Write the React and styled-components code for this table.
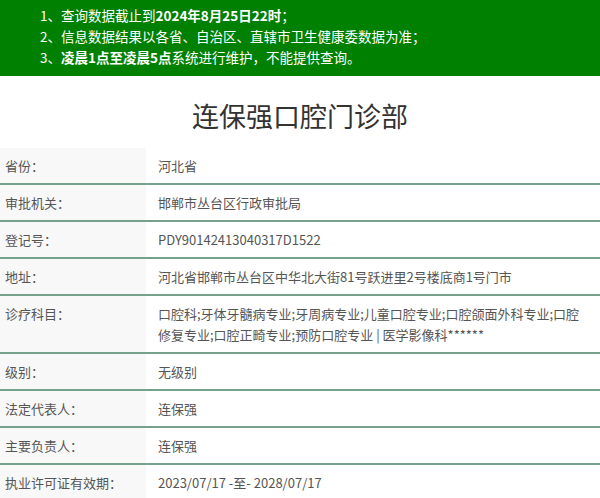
import React from "react";
import styled, { createGlobalStyle } from "styled-components";

const Global = createGlobalStyle`
  html, body { margin: 0; padding: 0; background: #fff; }
  body { font-family: "Noto Sans CJK SC", "Noto Sans", sans-serif; }
`;

const Page = styled.div`
  width: 600px;
  height: 498px;
  overflow: hidden;
  background: #fff;
`;

const Notice = styled.ol`
  list-style: none;
  margin: 0;
  background: #008000;
  color: #fff;
  font-size: 13.5px;
  line-height: 21px;
  padding: 5px 0 8px 40px;
  height: 63px;
`;

const NoticeItem = styled.li`
  white-space: nowrap;
`;

const Strong = styled.b`
  font-weight: 700;
`;

const Title = styled.h1`
  margin: 0;
  height: 72px;
  display: flex;
  align-items: center;
  justify-content: center;
  padding-top: 6px;
  box-sizing: border-box;
  font-size: 27px;
  font-weight: 400;
  color: #333;
`;

const Table = styled.div`
  display: grid;
  grid-template-columns: 146px 1fr;
`;

const Row = styled.div`
  display: contents;
`;

const Cell = styled.div`
  font-size: 13px;
  line-height: 21px;
  color: #555;
  padding: 7px 0;
  border-bottom: ${(p) => (p.$last ? "none" : "2px solid #76a18d")};
`;

const Label = styled(Cell)`
  background: #f8f8f8;
  padding-left: 5px;
`;

const Value = styled(Cell)`
  padding-left: 12px;
  padding-right: 8px;
`;

const rows = [
  ["省份：", "河北省"],
  ["审批机关：", "邯郸市丛台区行政审批局"],
  ["登记号：", "PDY90142413040317D1522"],
  ["地址：", "河北省邯郸市丛台区中华北大街81号跃进里2号楼底商1号门市"],
  [
    "诊疗科目：",
    "口腔科;牙体牙髓病专业;牙周病专业;儿童口腔专业;口腔颌面外科专业;口腔修复专业;口腔正畸专业;预防口腔专业 | 医学影像科******",
  ],
  ["级别：", "无级别"],
  ["法定代表人：", "连保强"],
  ["主要负责人：", "连保强"],
  ["执业许可证有效期：", "2023/07/17 -至- 2028/07/17"],
];

export default function App() {
  return (
    <Page>
      <Global />
      <Notice>
        <NoticeItem>
          1、查询数据截止到<Strong>2024年8月25日22时</Strong>；
        </NoticeItem>
        <NoticeItem>2、信息数据结果以各省、自治区、直辖市卫生健康委数据为准；</NoticeItem>
        <NoticeItem>
          3、<Strong>凌晨1点至凌晨5点</Strong>系统进行维护，不能提供查询。
        </NoticeItem>
      </Notice>
      <Title>连保强口腔门诊部</Title>
      <Table>
        {rows.map(([k, v], i) => {
          const last = i === rows.length - 1;
          return (
            <Row key={k}>
              <Label $last={last}>{k}</Label>
              <Value $last={last}>{v}</Value>
            </Row>
          );
        })}
      </Table>
    </Page>
  );
}
